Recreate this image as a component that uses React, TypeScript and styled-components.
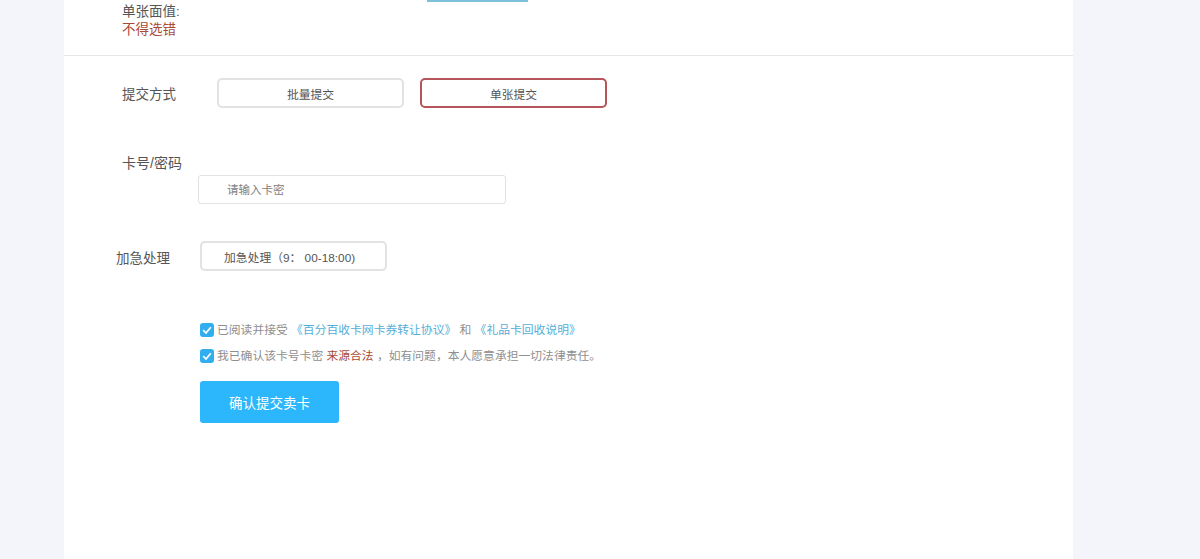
import React from "react";
import styled, { createGlobalStyle } from "styled-components";

const GlobalStyle = createGlobalStyle`
  html, body {
    margin: 0;
    padding: 0;
    height: 100%;
    overflow: hidden;
    background: #f3f5fa;
  }
  body {
    font-family: "Liberation Sans", "Noto Sans CJK SC", sans-serif;
    color: #555;
  }
`;

const Card = styled.div`
  box-sizing: border-box;
  width: 1009px;
  height: 559px;
  margin-left: 64px;
  background: #fff;
`;

const FaceValue = styled.div`
  box-sizing: border-box;
  height: 56px;
  padding-left: 58px;
  border-bottom: 1px solid #e6e6e6;
  display: flex;
`;

const FaceLabel = styled.div`
  font-size: 13.5px;
  line-height: 18px;
  padding-top: 3px;
  width: 305px;
`;

const Warn = styled.div`
  color: #a84a38;
`;

const PrevOption = styled.div`
  width: 101px;
  height: 2px;
  background: #7cc0dc;
`;

const Row = styled.div<{ $top: number; $left: number }>`
  display: flex;
  align-items: center;
  margin-top: ${(p) => p.$top}px;
  padding-left: ${(p) => p.$left}px;
`;

const Label = styled.div<{ $width: number; $drop: number }>`
  font-size: 13.5px;
  line-height: 18px;
  padding-top: ${(p) => p.$drop}px;
  width: ${(p) => p.$width}px;
`;

const Choice = styled.div<{ $active?: boolean; $width: number; $pad?: number }>`
  box-sizing: border-box;
  width: ${(p) => p.$width}px;
  height: 30px;
  margin-right: 16px;
  border: 2px solid ${(p) => (p.$active ? "#b5545a" : "#e2e2e2")};
  border-radius: 5px;
  font-size: 11.8px;
  line-height: 30px;
  color: #555;
  text-align: ${(p) => (p.$pad ? "left" : "center")};
  padding-left: ${(p) => p.$pad ?? 0}px;
  white-space: pre;
`;

const CardLabel = styled.div`
  font-size: 14px;
  line-height: 20px;
  margin: 45px 0 0 58px;
`;

const CardInput = styled.input`
  display: block;
  box-sizing: border-box;
  width: 308px;
  height: 29px;
  margin: 2px 0 0 134px;
  padding: 0 0 0 28px;
  border: 1px solid #e2e2e2;
  border-radius: 3px;
  outline: none;
  font-family: inherit;
  font-size: 11.5px;
  &::placeholder {
    color: #808080;
    opacity: 1;
  }
`;

const Agreements = styled.div`
  margin: 44px 0 0 136px;
`;

const Agreement = styled.div`
  display: flex;
  align-items: center;
  height: 26px;
  font-size: 11.8px;
  color: #8f8f8f;
  white-space: pre;
`;

const Tick = styled.span`
  width: 14px;
  height: 14px;
  margin: 4px 3px 0 0;
  border-radius: 3px;
  background: #30aef0;
  display: flex;
  align-items: center;
  justify-content: center;
`;

const Link = styled.span`
  color: #55aed8;
`;

const Legal = styled.span`
  color: #a84a38;
`;

const Submit = styled.button`
  display: block;
  width: 139px;
  height: 42px;
  margin: 14px 0 0 136px;
  border: none;
  border-radius: 3px;
  background: #2cb6fb;
  color: #fff;
  font-family: inherit;
  font-size: 13.5px;
`;

const Check = () => (
  <Tick>
    <svg width="12" height="12" viewBox="0 0 12 12">
      <path d="M2.2 6.2 5 9 9.8 3.2" fill="none" stroke="#fff" strokeWidth="1.7" />
    </svg>
  </Tick>
);

export default function App() {
  return (
    <Card>
      <GlobalStyle />
      <FaceValue>
        <FaceLabel>
          单张面值:
          <Warn>不得选错</Warn>
        </FaceLabel>
        <PrevOption />
      </FaceValue>
      <Row $top={22} $left={58}>
        <Label $width={95} $drop={4}>
          提交方式
        </Label>
        <Choice $width={187}>批量提交</Choice>
        <Choice $width={187} $active>
          单张提交
        </Choice>
      </Row>
      <CardLabel>卡号/密码</CardLabel>
      <CardInput placeholder="请输入卡密" />
      <Row $top={37} $left={52}>
        <Label $width={84} $drop={6}>
          加急处理
        </Label>
        <Choice $width={187} $pad={22}>
          加急处理（9： 00-18:00)
        </Choice>
      </Row>
      <Agreements>
        <Agreement>
          <Check />
          已阅读并接受 <Link>《百分百收卡网卡券转让协议》</Link> 和 <Link>《礼品卡回收说明》</Link>
        </Agreement>
        <Agreement>
          <Check />
          我已确认该卡号卡密 <Legal>来源合法</Legal> ，如有问题，本人愿意承担一切法律责任。
        </Agreement>
      </Agreements>
      <Submit>确认提交卖卡</Submit>
    </Card>
  );
}
